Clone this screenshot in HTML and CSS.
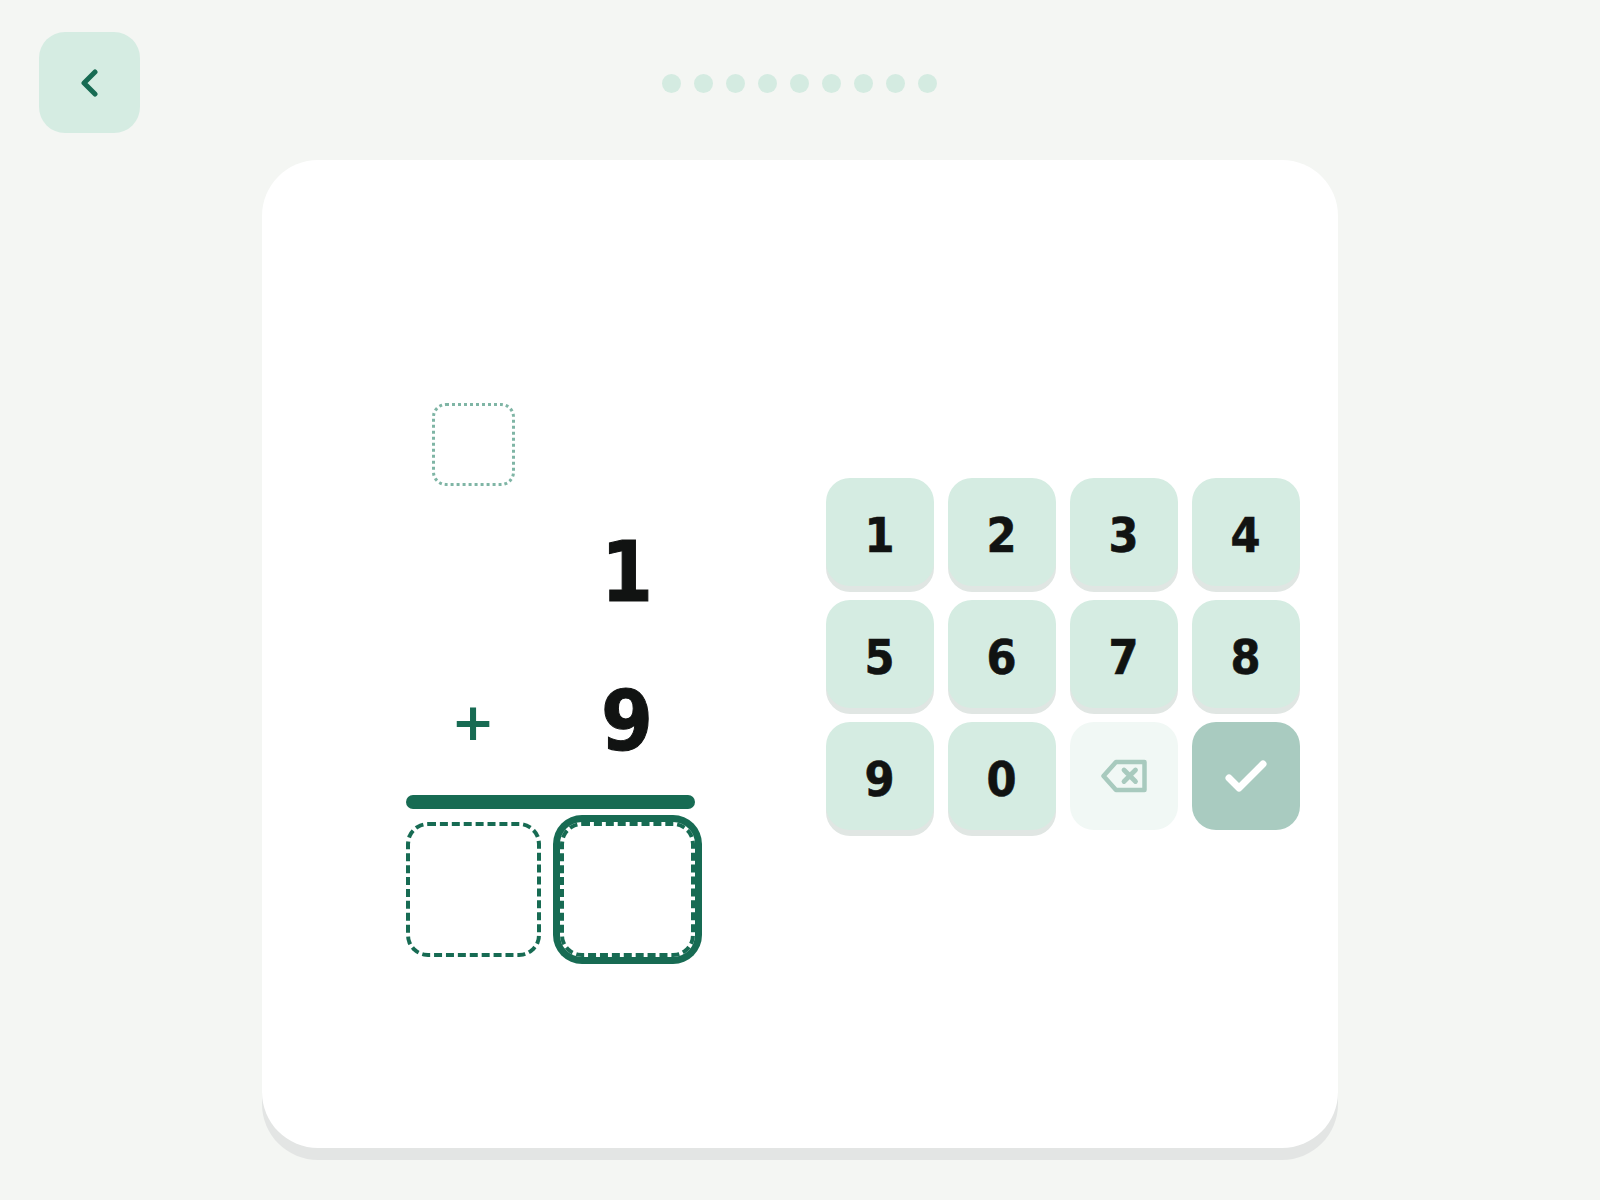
FILE: index.html
```html
<!DOCTYPE html>
<html lang="en">
<head>
<meta charset="utf-8">
<title>Addition</title>
<link rel="stylesheet" href="styles.css">
</head>
<body>
<div class="page">
  <header class="header">
    <button class="back" aria-label="Back">
      <svg width="17" height="28" viewBox="0 0 17 28"><polyline points="14,3 3,14 14,25" fill="none" stroke="#176b53" stroke-width="5" stroke-linecap="round" stroke-linejoin="round"/></svg>
    </button>
    <div class="dots">
      <span class="dot"></span><span class="dot"></span><span class="dot"></span>
      <span class="dot"></span><span class="dot"></span><span class="dot"></span>
      <span class="dot"></span><span class="dot"></span><span class="dot"></span>
    </div>
  </header>

  <main class="card">
    <div class="problem">
      <div class="carry"></div>
      <div class="digit top-digit">1</div>
      <div class="op">+</div>
      <div class="digit bottom-digit">9</div>
      <div class="rule"></div>
      <div class="answer"></div>
      <div class="answer active"></div>
    </div>

    <div class="keypad">
      <button class="key">1</button>
      <button class="key">2</button>
      <button class="key">3</button>
      <button class="key">4</button>
      <button class="key">5</button>
      <button class="key">6</button>
      <button class="key">7</button>
      <button class="key">8</button>
      <button class="key">9</button>
      <button class="key">0</button>
      <button class="key key-del" aria-label="Delete">
        <svg width="48" height="36" viewBox="0 0 48 36"><path d="M16 4 H44.5 V32 H16 L3.5 18 Z" fill="none" stroke="#a8cabe" stroke-width="4.5" stroke-linejoin="round"/><path d="M24 12 L35.5 23.5 M35.5 12 L24 23.5" stroke="#a8cabe" stroke-width="4.8" stroke-linecap="round"/></svg>
      </button>
      <button class="key key-ok" aria-label="Check">
        <svg width="44" height="34" viewBox="0 0 44 34"><polyline points="5,19 15,29 39,5" fill="none" stroke="#ffffff" stroke-width="7" stroke-linecap="round" stroke-linejoin="round"/></svg>
      </button>
    </div>
  </main>
</div>
</body>
</html>
```

FILE: styles.css
```css
* { box-sizing: border-box; }

html, body {
  margin: 0;
  padding: 0;
  background: #f4f6f3;
}

body {
  font-family: "DejaVu Sans Condensed", "DejaVu Sans", sans-serif;
  color: #111312;
}

.page {
  width: 1600px;
  height: 1200px;
  padding: 32px 40px 0 39px;
}

.header {
  display: grid;
  grid-template-columns: 101px 1fr 101px;
  align-items: center;
  height: 101px;
}

.back {
  width: 101px;
  height: 101px;
  border: none;
  border-radius: 26px;
  background: #d5ece2;
  display: flex;
  align-items: center;
  justify-content: center;
  padding: 0;
  cursor: pointer;
}

.dots {
  display: flex;
  justify-content: center;
  gap: 13px;
  padding-top: 2px;
}

.dot {
  width: 19px;
  height: 19px;
  border-radius: 50%;
  background: #d4ebe1;
}

.card {
  width: 1076px;
  height: 988px;
  margin: 27px auto 0;
  background: #ffffff;
  border-radius: 56px;
  box-shadow: 0 12px 0 #e3e5e4;
  display: flex;
  align-items: center;
  padding-left: 144px;
}

.problem {
  align-self: flex-start;
  margin-top: 243px;
  display: grid;
  grid-template-columns: 135px 135px;
  column-gap: 19px;
}

.carry {
  grid-column: 1;
  grid-row: 1;
  justify-self: center;
  width: 83px;
  height: 83px;
  border: 3px dotted #7fb5a5;
  border-radius: 14px;
}

.digit {
  font-weight: bold;
  font-size: 83px;
  line-height: 84px;
  height: 84px;
  padding-top: 2px;
  text-align: center;
  grid-column: 2;
  -webkit-text-stroke: 1px #111312;
}

.top-digit {
  grid-row: 2;
  margin-top: 43px;
}

.bottom-digit {
  grid-row: 3;
  margin-top: 65px;
}

.op {
  grid-column: 1;
  grid-row: 3;
  margin-top: 65px;
  height: 84px;
  font-family: "DejaVu Sans", sans-serif;
  font-weight: bold;
  font-size: 52px;
  line-height: 84px;
  padding-top: 2px;
  text-align: center;
  color: #176b53;
}

.rule {
  grid-column: 1 / -1;
  grid-row: 4;
  margin-top: 33px;
  height: 14px;
  border-radius: 7px;
  background: #176b53;
}

.answer {
  grid-row: 5;
  margin-top: 13px;
  width: 135px;
  height: 135px;
  border: 4px dashed #176b53;
  border-radius: 22px;
}

.answer.active {
  box-shadow: 0 0 0 7px #176b53;
}

.keypad {
  margin-left: 131px;
  display: grid;
  grid-template-columns: repeat(4, 108px);
  grid-auto-rows: 108px;
  gap: 14px;
}

.key {
  border: none;
  padding: 6px 0 0;
  margin: 0;
  border-radius: 24px;
  background: #d5ece2;
  box-shadow: 0 6px 0 #e0e6e3;
  font-family: "DejaVu Sans Condensed", "DejaVu Sans", sans-serif;
  font-weight: bold;
  font-size: 48px;
  line-height: 1;
  color: #111312;
  -webkit-text-stroke: 0.6px #111312;
  display: flex;
  align-items: center;
  justify-content: center;
  cursor: pointer;
}

.key-del {
  background: #f1f8f5;
  box-shadow: none;
  padding: 0;
}

.key-ok {
  background: #a9cbc0;
  box-shadow: none;
  padding: 0;
}
```
